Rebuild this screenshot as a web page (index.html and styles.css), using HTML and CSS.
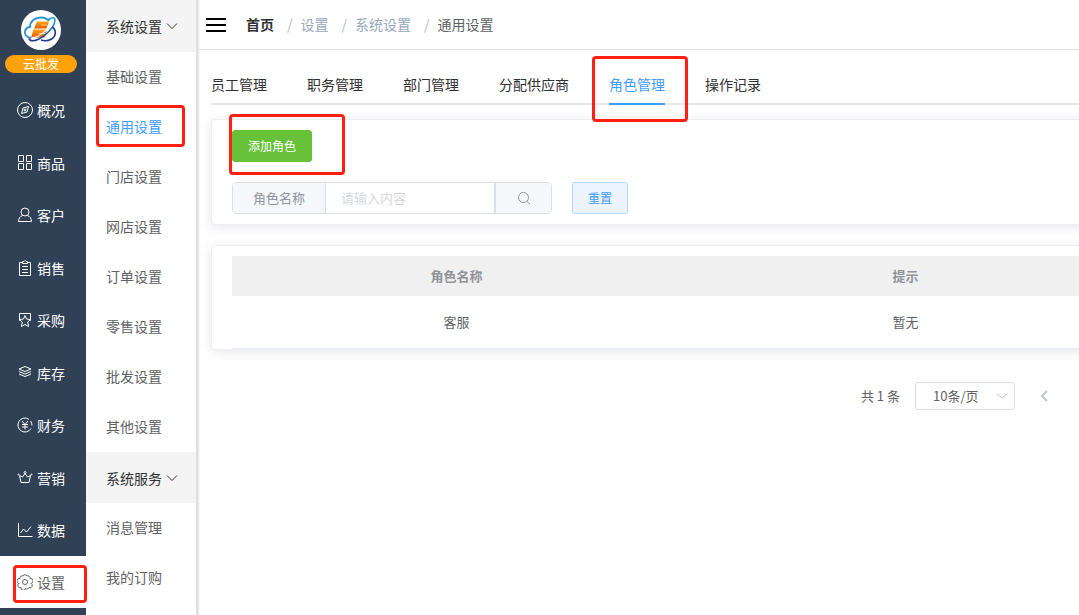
FILE: index.html
```html
<!doctype html>
<html lang="zh-CN">

<head>
  <meta charset="UTF-8" />
  <meta name="viewport" content="width=device-width, initial-scale=1.0" />
  <title>角色管理</title>
  <link rel="stylesheet" href="styles.css">
</head>

<body>
  <div class="app">
    <!-- Main navigation -->
    <aside class="sidebar">
      <div class="brand">
        <svg class="logo" viewBox="0 0 40 40" aria-hidden="true">
          <defs>
            <linearGradient id="orange" x1="0" y1="0" x2="0" y2="1">
              <stop offset="0" stop-color="#fba51a" />
              <stop offset="1" stop-color="#e35a05" />
            </linearGradient>
            <linearGradient id="blue" x1="0" y1="1" x2="1" y2="0">
              <stop offset="0" stop-color="#1b2f86" />
              <stop offset="1" stop-color="#26a4dc" />
            </linearGradient>
          </defs>
          <circle cx="20" cy="20" r="20" fill="#fff" />
          <path d="M10 28C5 27 3 24 4 21C5 18 7 17 9 17C9 11 14 7.500 20 7.500C23.500 7.500 26 8.500 28 11" fill="none" stroke="#2492d2" stroke-width="1.800" />
          <path d="M16 11.500H28L25.500 18.500H13Z" fill="url(#orange)" />
          <path d="M12.500 19.500H26L23.500 27.500H10Z" fill="url(#orange)" />
          <path d="M20 15H26M18 23.500H24" stroke="#ffe0b0" stroke-width="0.800" />
          <path d="M11 28C18 27 27 21 31 11" fill="none" stroke="#fff" stroke-width="1.200" />
          <path d="M27 10C31 7 34 7 34 10C34 16 26 25 18 29C13 31.500 9 31.500 8 28.500" fill="none" stroke="url(#blue)" stroke-width="1.600" />
          <path d="M31 17C35.500 19.500 35.500 26 30.500 29C27 31 23 31 20 30" fill="none" stroke="#1c3a92" stroke-width="1.600" />
        </svg>
        <span class="badge">云批发</span>
      </div>
      <nav>
        <ul class="nav">
          <li><a href="#">
            <svg class="icon" viewBox="0 0 16 16"><circle cx="8" cy="8" r="7.500" /><path d="M11.500 4.500L10 10L4.500 11.500L6 6Z" /><circle cx="8" cy="8" r="1" /></svg>
            概况</a></li>
          <li><a href="#">
            <svg class="icon" viewBox="0 0 16 16"><path d="M1.500 0.500h5v6h-5zM9.500 0.500h5v6h-5zM1.500 8.500h5v6h-5zM9.500 8.500h5v6h-5z" /></svg>
            商品</a></li>
          <li><a href="#">
            <svg class="icon" viewBox="0 0 16 16"><circle cx="8" cy="5" r="4" /><path d="M5.500 8.500C3 9.500 1.500 11.500 1.500 14.500H14.500C14.500 11.500 13 9.500 10.500 8.500" /></svg>
            客户</a></li>
          <li><a href="#">
            <svg class="icon" viewBox="0 0 16 16"><path d="M5.500 2.500H2.500V15.500H13.500V2.500H10.500M5.500 3.500V1.500H7L8 0.500L9 1.500H10.500V3.500ZM5 6.500H11M5 9.500H11M5 12.500H11" /></svg>
            销售</a></li>
          <li><a href="#">
            <svg class="icon" viewBox="0 0 16 16"><path d="M4 8.500H2.500V1.500H13.500V8.500H12M8 3.500L9.500 7L13.500 7.500L10.700 10L11.500 14.500L8 12.500L4.500 14.500L5.300 10L2.500 7.500L6.500 7Z" /></svg>
            采购</a></li>
          <li><a href="#">
            <svg class="icon" viewBox="0 0 16 16"><path d="M8 1.500L14 4L8 6.500L2 4ZM2 6.500L8 9L14 6.500M2 9L8 11.500L14 9" /></svg>
            库存</a></li>
          <li><a href="#">
            <svg class="icon" viewBox="0 0 16 16"><path d="M12 2.300A7 7 0 1 0 14 11.500M13.500 4A7 7 0 0 1 15 8.500M5 4L8 7.500L11 4M8 7.500V12.500M5 7.500H11M5 10H11" /></svg>
            财务</a></li>
          <li><a href="#">
            <svg class="icon" viewBox="0 0 16 16"><path d="M2.500 5.500L4 12.500H12L13.500 5.500L10.500 7L8 3.500L5.500 7Z" /><circle cx="8" cy="2.500" r="1" /><circle cx="1.500" cy="4.500" r="0.500" /><circle cx="14.500" cy="4.500" r="0.500" /></svg>
            营销</a></li>
          <li><a href="#">
            <svg class="icon" viewBox="0 0 16 16"><path d="M1.500 1V14.500H15.500M3.500 11L6.500 7L9.500 10L14 4.500" /></svg>
            数据</a></li>
          <li class="active"><a href="#">
            <svg class="icon" viewBox="0 0 16 16"><path d="M6 2A2.200 2.200 0 0 1 10 2A2.200 2.200 0 0 1 13 4.500A2.200 2.200 0 0 1 14 9.500A2.200 2.200 0 0 1 12 13.500A2.200 2.200 0 0 1 8.500 14.500A2.200 2.200 0 0 1 4 13.500A2.200 2.200 0 0 1 2 9.500A2.200 2.200 0 0 1 3 4.500A2.200 2.200 0 0 1 6 2Z" /><circle cx="8" cy="8" r="2.500" /></svg>
            设置</a><span class="mark mark-nav"></span></li>
        </ul>
      </nav>
    </aside>

    <!-- Settings submenu -->
    <nav class="submenu">
      <button class="group" type="button">系统设置
        <svg class="chevron" viewBox="0 0 12 12"><path d="M1 3.500L6 8.500L11 3.500" /></svg>
      </button>
      <ul>
        <li><a href="#">基础设置</a></li>
        <li class="current"><a href="#">通用设置</a><span class="mark mark-sub"></span></li>
        <li><a href="#">门店设置</a></li>
        <li><a href="#">网店设置</a></li>
        <li><a href="#">订单设置</a></li>
        <li><a href="#">零售设置</a></li>
        <li><a href="#">批发设置</a></li>
        <li><a href="#">其他设置</a></li>
      </ul>
      <button class="group" type="button">系统服务
        <svg class="chevron" viewBox="0 0 12 12"><path d="M1 3.500L6 8.500L11 3.500" /></svg>
      </button>
      <ul>
        <li><a href="#">消息管理</a></li>
        <li><a href="#">我的订购</a></li>
      </ul>
    </nav>

    <main class="main">
      <header class="topbar">
        <button class="toggle" type="button" aria-label="菜单">
          <span></span><span></span><span></span>
        </button>
        <ol class="breadcrumb">
          <li><a class="home" href="#">首页</a></li>
          <li><a href="#">设置</a></li>
          <li><a href="#">系统设置</a></li>
          <li class="here">通用设置</li>
        </ol>
      </header>

      <div class="content">
        <nav class="tabs">
          <a href="#">员工管理</a>
          <a href="#">职务管理</a>
          <a href="#">部门管理</a>
          <a href="#">分配供应商</a>
          <a class="selected" href="#">角色管理<span class="mark mark-tab"></span></a>
          <a href="#">操作记录</a>
        </nav>

        <section class="card filters">
          <div class="actions">
            <button class="btn btn-add" type="button">添加角色</button>
            <span class="mark mark-add"></span>
          </div>
          <form class="search">
            <div class="input-group">
              <label for="role-name">角色名称</label>
              <input id="role-name" type="text" placeholder="请输入内容">
              <button type="button" aria-label="搜索">
                <svg viewBox="0 0 14 14"><circle cx="6.500" cy="6.500" r="5" /><path d="M10 10.500L13 13" /></svg>
              </button>
            </div>
            <button class="btn btn-reset" type="reset">重置</button>
          </form>
        </section>

        <section class="card">
          <table class="roles">
            <thead>
              <tr><th>角色名称</th><th>提示</th></tr>
            </thead>
            <tbody>
              <tr><td>客服</td><td>暂无</td></tr>
            </tbody>
          </table>
        </section>
      </div>

      <div class="pagination">
        <span>共 1 条</span>
        <div class="page-size">
          <select aria-label="每页条数">
            <option>10条/页</option>
          </select>
          <svg class="chevron" viewBox="0 0 12 12"><path d="M1 4L6 8L11 4" /></svg>
        </div>
        <button class="prev" type="button" aria-label="上一页">
          <svg viewBox="0 0 12 12"><path d="M8 1L3 6L8 11" /></svg>
        </button>
      </div>
    </main>
  </div>
</body>

</html>
```

FILE: styles.css
```css
* {
  margin: 0;
  padding: 0;
  box-sizing: border-box;
}

body {
  font: 14px/20px "Noto Sans CJK SC", sans-serif;
  color: #606266;
  background: #fff;
}

button,
input,
select {
  font: inherit;
  color: inherit;
  border: none;
  background: none;
}

button {
  cursor: pointer;
}

a {
  color: inherit;
  text-decoration: none;
}

ul,
ol {
  list-style: none;
}

svg {
  fill: none;
  stroke: currentColor;
}

.app {
  display: flex;
  height: 100vh;
  overflow: hidden;
}

/* Sidebar */
.sidebar {
  flex: none;
  width: 86px;
  background: #304156;
  color: #fff;
}

.brand {
  display: flex;
  flex-direction: column;
  align-items: center;
  gap: 5px;
  height: 84px;
  padding: 10px 4px 0 0;
}

.logo {
  width: 40px;
  height: 40px;
  stroke: none;
}

.badge {
  width: 72px;
  border-radius: 9px;
  background: #ffa20b;
  font-size: 12px;
  line-height: 18px;
  text-align: center;
}

.nav li {
  position: relative;
  height: 52px;
}

.nav li:nth-child(even) {
  height: 53px;
}

.nav li.active {
  height: 52px;
  background: #fff;
  color: #606266;
}

.nav a {
  display: flex;
  align-items: center;
  gap: 4px;
  height: 100%;
  padding-left: 17px;
}

.icon {
  width: 16px;
  height: 16px;
}

/* Submenu */
.submenu {
  flex: none;
  width: 110px;
}

.group {
  display: flex;
  align-items: center;
  gap: 4px;
  width: 100%;
  height: 51px;
  padding-left: 20px;
  background: #f4f4f4;
  color: #303133;
}

.group:first-child {
  height: 52px;
}

.chevron {
  width: 12px;
  height: 12px;
}

.submenu li {
  position: relative;
  height: 50px;
  padding-left: 20px;
  line-height: 48px;
}

.submenu a {
  display: block;
}

.submenu .current {
  color: #409eff;
}

/* Main area */
.main {
  flex: 1;
  min-width: 0;
  overflow: hidden;
  border-left: 1px solid #e0e0e0;
  box-shadow: inset 4px 0 3px -3px rgba(0, 0, 0, 0.2);
}

.topbar {
  display: flex;
  align-items: center;
  gap: 20px;
  height: 50px;
  padding-left: 9px;
  border-bottom: 1px solid #e4e4e4;
}

.toggle {
  display: flex;
  flex-direction: column;
  gap: 4px;
  width: 20px;
}

.toggle span {
  height: 2px;
  background: #000;
}

.breadcrumb {
  display: flex;
  line-height: 18px;
  padding-bottom: 2px;
  color: #97a8be;
}

.breadcrumb li + li::before {
  content: "/";
  margin: 0 8px 0 13px;
  color: #b4bccc;
}

.breadcrumb .home {
  color: #303133;
  font-weight: 700;
}

.breadcrumb .here {
  color: #606266;
}

/* The cards run on past the right edge of the window */
.content {
  margin-right: -72px;
  padding: 15px 0 0 14px;
}

.tabs {
  display: flex;
  gap: 40px;
  border-bottom: 2px solid #e4e7ed;
  color: #303133;
}

.tabs a {
  position: relative;
  margin-bottom: -2px;
  border-bottom: 2px solid transparent;
  line-height: 38px;
}

.tabs .selected {
  border-color: #409eff;
  color: #409eff;
}

.card {
  margin-bottom: 20px;
  padding: 10px 20px 0;
  border: 1px solid #ebeef5;
  border-radius: 4px;
  background: #fff;
  box-shadow: 0 2px 12px rgba(0, 0, 0, 0.1);
}

.filters {
  margin-top: 14px;
  padding-bottom: 10px;
}

.actions {
  position: relative;
  display: flex;
  margin-bottom: 20px;
}

.btn {
  height: 32px;
  padding: 0 15px;
  border: 1px solid;
  border-radius: 3px;
  font-size: 12px;
}

.btn-add {
  border-color: #67c23a;
  background: #67c23a;
  color: #fff;
}

.btn-reset {
  border-color: #b3d8ff;
  background: #ecf5ff;
  color: #409eff;
}

.search {
  display: flex;
  gap: 20px;
}

.input-group {
  display: flex;
  width: 320px;
  height: 32px;
  border: 1px solid #dcdfe6;
  border-radius: 4px;
  overflow: hidden;
  font-size: 13px;
  line-height: 30px;
  color: #909399;
}

.input-group label {
  padding: 0 20px;
  background: #f5f7fa;
}

.input-group input {
  flex: 1;
  min-width: 0;
  padding: 0 15px;
  border: 1px solid #dcdfe6;
  border-width: 0 1px;
}

.input-group input::placeholder {
  color: #d5d8de;
}

.input-group button {
  width: 56px;
  border-left: 1px solid #dcdfe6;
  background: #f5f7fa;
}

.input-group svg {
  display: block;
  width: 14px;
  height: 14px;
  margin: auto;
}

.roles {
  width: 100%;
  table-layout: fixed;
  border-collapse: collapse;
  font-size: 13px;
  text-align: center;
}

.roles th {
  height: 40px;
  background: #f0f0f0;
  color: #909399;
}

.roles td {
  height: 52px;
  border-bottom: 1px solid #ebeef5;
}

/* Pagination */
.pagination {
  display: flex;
  justify-content: flex-end;
  align-items: center;
  gap: 15px;
  padding: 12px 19px 0 0;
  font-size: 13px;
}

.page-size {
  position: relative;
  width: 100px;
}

.page-size select {
  width: 100%;
  height: 28px;
  padding-left: 17px;
  border: 1px solid #dcdfe6;
  border-radius: 3px;
  appearance: none;
}

.page-size .chevron {
  position: absolute;
  top: 8px;
  right: 7px;
  color: #c0c4cc;
  pointer-events: none;
}

.prev {
  width: 30px;
  height: 28px;
  color: #c0c4cc;
}

.prev svg {
  display: block;
  width: 12px;
  height: 12px;
  margin: auto;
  stroke-width: 2;
}

/* Red highlight frames */
.mark {
  position: absolute;
  z-index: 1;
  border: 3px solid #ff2012;
  border-radius: 4px;
  pointer-events: none;
}

.mark-nav {
  inset: 9px -1px 5px 13px;
}

.mark-sub {
  inset: 3px 11px 5px 10px;
}

.mark-tab {
  inset: -9px -23px -19px -17px;
}

.mark-add {
  top: -16px;
  left: -3px;
  width: 116px;
  height: 61px;
}
```
